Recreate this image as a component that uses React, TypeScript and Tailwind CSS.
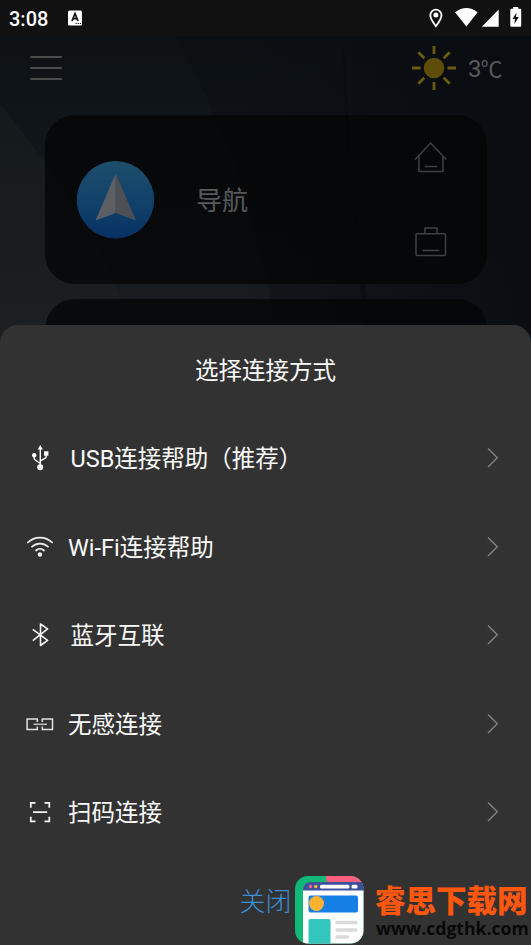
import type { ReactNode } from "react";

type ConnectOption = {
    label: string;
    icon: ReactNode;
    indent: string;
};

function UsbIcon() {
    return (
        <svg width="32" height="32" viewBox="0 0 32 32" fill="none" stroke="#fff" strokeWidth="1.4">
            <path d="M16.3 6.500v18M16.300 21.500l-5.300-3.700q-.8-.6-.8-1.600v-2.500M16.300 18.800l5-2.700q.9-.5.9-1.500v-2.500" />
            <path d="M16.300 3l2.600 4.500h-5.200z" fill="#fff" stroke="none" />
            <circle cx="16.200" cy="25.300" r="3" fill="#fff" stroke="none" />
            <circle cx="10.200" cy="13.300" r="2.200" fill="#fff" stroke="none" />
            <path d="M20 9.300h4.400v4.400h-4.400z" fill="#fff" stroke="none" />
        </svg>
    );
}

function WifiIcon() {
    return (
        <svg width="32" height="32" viewBox="0 0 32 32" fill="none" stroke="#f2f2f2" strokeWidth="1.700" strokeLinecap="round">
            <path d="M3.800 11.500a17.500 17.500 0 0 1 24.400 0M8 15.700a11.800 11.800 0 0 1 16 0M12 19.500a6 6 0 0 1 8 0" />
            <circle cx="15.900" cy="23.500" r="2.200" fill="#f2f2f2" stroke="none" />
        </svg>
    );
}

function BluetoothIcon() {
    return (
        <svg width="32" height="32" viewBox="0 0 32 32" fill="none" stroke="#f5f5f5" strokeWidth="1.600" strokeLinejoin="round">
            <path d="M8.800 10.400L23.600 21.400L16.500 26.500V5L23.600 9.800L8.800 21.600" />
        </svg>
    );
}

function LinkIcon() {
    return (
        <svg width="32" height="32" viewBox="0 0 32 32" fill="none" stroke="#e2e2e2" strokeWidth="1.500">
            <path d="M13.300 13.900V11H3.100v10.500h10.200v-2.900M18.300 13.900V11h10.200v10.500H18.300v-2.900" />
            <path d="M9.500 16.300h13.500" stroke="#c4c4c4" />
        </svg>
    );
}

function ScanIcon() {
    return (
        <svg width="32" height="32" viewBox="0 0 32 32" fill="none" stroke="#f5f5f5" strokeWidth="1.700">
            <path d="M6.800 11.800V6.900h4.700M20.500 6.900h4.800v4.900M25.300 20.700v4.700h-4.800M11.500 25.400H6.800v-4.700M9 16.200h14.200" />
        </svg>
    );
}

const options: ConnectOption[] = [
    { label: "USB连接帮助（推荐）", icon: <UsbIcon />, indent: "ml-[14.5px]" },
    { label: "Wi-Fi连接帮助", icon: <WifiIcon />, indent: "ml-3" },
    { label: "蓝牙互联", icon: <BluetoothIcon />, indent: "ml-[14.5px]" },
    { label: "无感连接", icon: <LinkIcon />, indent: "ml-3" },
    { label: "扫码连接", icon: <ScanIcon />, indent: "ml-3" },
];

function Wallpaper() {
    return (
        <svg className="absolute inset-0" width="531" height="360" viewBox="0 0 531 360">
            <defs>
                <linearGradient id="sky" x1="0" y1="0" x2="0" y2="1">
                    <stop offset="0" stopColor="#0c1013" />
                    <stop offset=".35" stopColor="#101519" />
                    <stop offset="1" stopColor="#1a1e21" />
                </linearGradient>
                <linearGradient id="shade" x1="0" y1="0" x2="1" y2="0">
                    <stop offset=".45" stopColor="#080b10" stopOpacity="0" />
                    <stop offset="1" stopColor="#080b10" stopOpacity=".8" />
                </linearGradient>
                <linearGradient id="facet" x1="0" y1="0" x2="0" y2="1">
                    <stop offset="0" stopColor="#14191c" />
                    <stop offset="1" stopColor="#1d2023" />
                </linearGradient>
            </defs>
            <path d="M0 0h531v360H0z" fill="url(#sky)" />
            <path d="M0 104L45 162L95 240L148 360H0z" fill="url(#facet)" />
            <path d="M176 36L206 96L235 165L268 280L280 360H531V36z" fill="#090c10" opacity=".3" />
            <path d="M343 36L351 150L365 285L370 330L366 330L357 260L346 150z" fill="#07090b" opacity=".6" />
            <path d="M0 0h531v360H0z" fill="url(#shade)" />
        </svg>
    );
}

function StatusBar() {
    return (
        <div className="relative flex h-9 items-center justify-between bg-[#111111] pr-2 pl-[9px]">
            <div className="flex items-center gap-5">
                <span className="pt-px font-['Roboto'] text-xl leading-9 font-medium text-white">3:08</span>
                <svg width="14" height="16" viewBox="0 0 14 16">
                    <rect y=".5" width="14" height="15" rx="1.500" fill="#fff" />
                    <path d="M4 11l3-7.500L10 11M5.100 8.700h3.800" fill="none" stroke="#111" strokeWidth="1.700" />
                    <path d="M7.500 13.500h5.500" stroke="#111" strokeWidth="1.200" strokeDasharray="1.200 1" />
                </svg>
            </div>
            <svg width="94" height="24" viewBox="429 6 94 24" fill="#fff">
                <path d="M435.900 9.700a5.600 5.600 0 0 0-5.600 5.600c0 3.700 5.600 10.900 5.600 10.900s5.600-7.200 5.600-10.900a5.600 5.600 0 0 0-5.600-5.600z" fill="none" stroke="#fff" strokeWidth="1.800" />
                <circle cx="435.900" cy="15.100" r="2.500" />
                <path d="M455 12.300q11.500-8.600 22.700 0L466.400 26.400z" />
                <path d="M498.700 9.500V26.700H481.800z" />
                <path d="M511.200 8.700h2V7h5v1.700h2.200q.8 0 .8.800v16.300q0 .9-.8.900h-9.200q-.9 0-.9-.9V9.500q0-.8.900-.800z" />
                <path d="M516.500 12.500l-4 6.500h2.500l-.6 5 4.400-7h-2.800z" fill="#111" />
            </svg>
        </div>
    );
}

function Toolbar() {
    return (
        <div className="relative flex h-[79px] items-start justify-between pt-[9px] pr-[29px] pl-[30px]">
            <div className="mt-[11px] flex w-8 flex-col gap-[9px]">
                <span className="h-0.5 rounded bg-[#4a4b4c]" />
                <span className="h-0.5 rounded bg-[#4a4b4c]" />
                <span className="h-0.5 rounded bg-[#4a4b4c]" />
            </div>
            <div className="flex items-center gap-[11px]">
                <svg width="46" height="46" viewBox="0 0 46 46" stroke="#6a5b10" strokeWidth="2.800">
                    <circle cx="23" cy="23" r="10.300" fill="#5d4d08" stroke="none" />
                    <path d="M23 1v8M23 37v8M1 23h8.500M36.500 23H45M7.300 7.300l6 6M32.700 32.700l6 6M7.300 38.700l6-6M32.700 13.300l6-6" />
                </svg>
                <span className="w-[34px] pt-0.5 font-['Roboto','Noto_Sans_CJK_SC',sans-serif] text-2xl leading-none whitespace-nowrap text-[#58595a]">
                    3<span className="-ml-px text-[22px]">℃</span>
                </span>
            </div>
        </div>
    );
}

function NavigationCard() {
    return (
        <div className="mx-[45px] flex h-[169px] w-[442px] items-center rounded-[30px] bg-[#030405]/75 pl-8">
            <svg width="78" height="78" viewBox="0 0 78 78">
                <defs>
                    <linearGradient id="disc" x1="0" y1="0" x2="0" y2="1">
                        <stop offset="0" stopColor="#1d4e6b" />
                        <stop offset=".55" stopColor="#11416a" />
                        <stop offset="1" stopColor="#073163" />
                    </linearGradient>
                </defs>
                <circle cx="38.500" cy="38.800" r="38.700" fill="url(#disc)" />
                <path d="M38.700 12.500L18.500 59.500L38.700 52z" fill="#5c5f63" />
                <path d="M38.700 12.500L59 59.500L38.700 52z" fill="#4d4f54" />
            </svg>
            <span className="ml-[41px] pt-[3px] text-[26px] leading-none text-[#58595a]">导航</span>
            <div className="ml-auto flex flex-col gap-[51px] pr-10">
                <svg width="34" height="34" viewBox="0 0 34 34" fill="none" stroke="#3f4041" strokeWidth="1.500">
                    <path d="M2 19.500L17.700 3L33.200 19.500M6 16v15.500h24V16M11.800 26.500h12.500" />
                </svg>
                <svg width="34" height="34" viewBox="0 0 34 34" fill="none" stroke="#3f4041" strokeWidth="1.500">
                    <path d="M12 8.700V3h12v5.700M9.500 25.500h17" />
                    <rect x="3" y="8.700" width="29.500" height="21.800" rx="1" />
                </svg>
            </div>
        </div>
    );
}

function ConnectRow({ label, icon, indent }: ConnectOption) {
    return (
        <li className="flex h-[88.500px] items-center pr-[31px] pl-6">
            {icon}
            <span className={`${indent} flex-1 pt-[3px] text-[23.500px] leading-none text-[#fafafa]`}>{label}</span>
            <svg width="14" height="22" viewBox="0 0 14 22" fill="none" stroke="#828282" strokeWidth="1.400">
                <path d="M2 1.500l9.300 9.300L2 20.100" />
            </svg>
        </li>
    );
}

function SiteMark() {
    return (
        <div className="absolute right-1 bottom-px flex h-[68px] items-start">
            <svg width="69" height="68" viewBox="0 0 69 68">
                <clipPath id="tile">
                    <rect width="68.500" height="67.500" rx="13" />
                </clipPath>
                <g clipPath="url(#tile)">
                    <path d="M0 0h69v68H0z" fill="#12b877" />
                    <path d="M31 0h38v12H36q-5-3-5-12z" fill="#fa5f80" />
                    <path d="M8 15q0-9 8-9h53v10H8z" fill="#3e519d" />
                    <path d="M8 14.500h61V68H8z" fill="#fff" />
                    <circle cx="15.500" cy="10.500" r="1.700" fill="#f06292" />
                    <circle cx="20.800" cy="10.500" r="1.700" fill="#ffb638" />
                    <rect x="25" y="8.700" width="29.500" height="3.800" rx="1.500" fill="#fff" />
                    <rect x="56.500" y="8.700" width="6" height="3.800" rx="1.500" fill="#fff" />
                    <rect x="13.500" y="19.500" width="49.500" height="17" rx="2" fill="#1480e5" />
                    <circle cx="21.500" cy="27.500" r="7.500" fill="#ffb232" />
                    <path d="M13.500 68V45q0-2 2-2h18q2 0 2 2v23z" fill="#32c6bd" />
                    <path d="M42 46.500h19M42 54h19M42 61h10.500" stroke="#dadada" strokeWidth="3.500" strokeLinecap="round" />
                </g>
            </svg>
            <div className="ml-[11px] w-[152px] whitespace-nowrap">
                <p className="mt-[9px] text-[30.500px] leading-[34px] font-black text-[#ff570d]">睿思下载网</p>
                <p className="pl-px font-['Open_Sans','Noto_Sans',sans-serif] text-[17.600px] leading-[18px] font-bold text-[#080808]">www.cdgthk.com</p>
            </div>
        </div>
    );
}

export default function App() {
    return (
        <main className="relative h-[945px] w-[531px] overflow-hidden bg-[#101417] font-['Roboto','Noto_Sans_CJK_SC',sans-serif]">
            <Wallpaper />
            <StatusBar />
            <Toolbar />
            <div className="relative flex flex-col gap-[15px]">
                <NavigationCard />
                <div className="mx-[45px] h-[169px] w-[442px] rounded-[30px] bg-[#030405]/75" />
            </div>

            <section className="absolute inset-x-0 bottom-0 h-[620px] rounded-t-[18px] bg-[#323232]">
                <h1 className="pt-[34px] text-center text-[23.500px] leading-6 text-[#fafafa]">选择连接方式</h1>
                <ul className="mt-[31px]">
                    {options.map((option) => (
                        <ConnectRow key={option.label} {...option} />
                    ))}
                </ul>
                <button type="button" className="mx-auto mt-[31px] block text-[26px] leading-7 font-light text-[#3a8fd9]">关闭</button>
                <SiteMark />
            </section>
        </main>
    );
}
